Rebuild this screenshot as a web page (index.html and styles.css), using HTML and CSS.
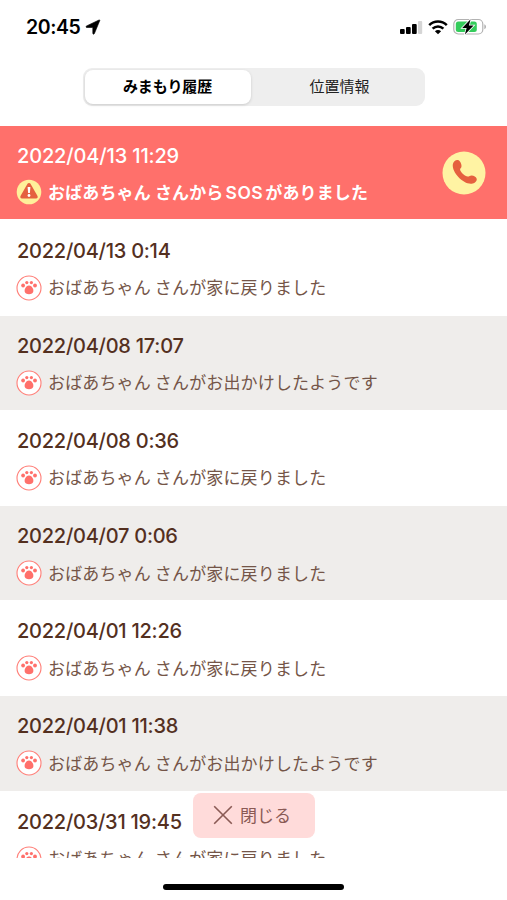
FILE: index.html
```html
<!DOCTYPE html>
<html lang="ja">
<head>
  <meta charset="UTF-8" />
  <meta name="viewport" content="width=device-width, initial-scale=1.0"/>
  <title>みまもり履歴</title>
  <link rel="stylesheet" href="styles.css">
</head>
<body>
  <svg class="sprite" width="0" height="0">
    <symbol id="paw" viewBox="0 0 26 26">
      <circle cx="13" cy="13" r="12" fill="#fff" stroke="#ff7f78" stroke-width="1.1"/>
      <g fill="#ff706b">
        <circle cx="7.1" cy="10.5" r="1.9"/>
        <circle cx="10.8" cy="7.6" r="1.6"/>
        <circle cx="15.4" cy="7.6" r="1.6"/>
        <circle cx="19" cy="10.5" r="1.9"/>
        <path d="M13 10.500c2 0 2.700 1.200 3.600 2.600 1.300 2 1 4.700-.6 5.500-1 .6-2 .700-3 .700s-2-.1-3-.7c-1.600-.8-1.900-3.500-.6-5.500.9-1.400 1.600-2.600 3.600-2.600z"/>
      </g>
    </symbol>
  </svg>

  <header class="status">
    <div class="time">
      <span>20:45</span>
      <svg width="16" height="16" viewBox="0 0 16 16"><path d="M14.8 1.5 9.4 14.6c-.4.9-1.6.7-1.6-.3V8.500H1.900c-1 0-1.200-1.200-.3-1.600L14 1c.6-.3 1 0 .8.5z" stroke="#000" stroke-width=".6"/></svg>
    </div>
    <div class="signals">
      <svg width="23" height="15" viewBox="0 0 23 15">
        <rect x="0" y="9" width="4.7" height="5" rx="1"/>
        <rect x="6" y="7" width="4.7" height="7" rx="1"/>
        <rect x="12" y="4" width="4.7" height="10" rx="1"/>
        <rect x="18" y="1" width="4.2" height="13" rx="1" fill="#d5d5d5"/>
      </svg>
      <svg width="20" height="15" viewBox="0 0 20 15">
        <g fill="none" stroke="#000" stroke-width="2.5">
          <path d="M1.2 5.2c5-4.8 12.6-4.8 17.600 0"/>
          <path d="M4.6 8.700c3.100-3 7.700-3 10.800 0"/>
        </g>
        <path d="M10 14.300 6.900 11.200c1.800-1.500 4.400-1.500 6.200 0z"/>
      </svg>
      <svg width="34" height="18" viewBox="0 0 34 18">
        <rect x=".8" y="1.5" width="29" height="14.5" rx="4.5" fill="none" stroke="#b2b2b2" stroke-width="1.2"/>
        <path d="M31.300 6.300v5c2.300-.8 2.300-4.200 0-5z" fill="#b2b2b2"/>
        <rect x="2.8" y="3.5" width="21" height="10.5" rx="2.5" fill="#34cc5b"/>
        <path d="M17.600 1.200 9.200 10h4.400l-1.700 6.400 8.700-8.900h-4.700z" stroke="#fff" stroke-width="1.6" paint-order="stroke"/>
      </svg>
    </div>
  </header>

  <nav class="tabs">
    <button class="tab active">みまもり履歴</button>
    <button class="tab">位置情報</button>
  </nav>

  <main class="history">
    <div class="row sos">
      <div class="info">
        <div class="date">2022/04/13 11:29</div>
        <div class="message">
          <svg class="icon" viewBox="0 0 26 26">
            <circle cx="13" cy="13" r="12.3" fill="#fff09a"/>
            <path d="M11.500 4.800c.6-1 2.400-1 3 0l7 12.200c.6 1.200-.1 2.400-1.400 2.400H5.900c-1.300 0-2-1.200-1.400-2.400z" fill="#e5603f"/>
            <path d="M11.600 8h2.800l-.5 6h-1.800z" fill="#fff"/>
            <circle cx="13" cy="16.500" r="1.4" fill="#fff"/>
          </svg>
          <span>おばあちゃん さんから<b class="latin">SOS</b>がありました</span>
        </div>
      </div>
      <button class="call" aria-label="電話">
        <svg width="44" height="44" viewBox="0 0 44 44">
          <circle cx="22" cy="22" r="21.5" fill="#fff3a3"/>
          <path d="M10.800 13.500c.3-3 3.700-5.400 5.800-4.200 1.900 1.100 3.400 4.800 2.800 6.700-.3 1.100-1.500 1.500-1.300 2.700.4 2.600 4.900 6.500 7.600 6.800 1.500.2 2.300-1.200 3.900-1.100 2.200.1 4.700 1.700 5.100 3.300.6 2.300-2.200 4.700-5 5-8.200.9-19.900-11-18.900-19.200z" fill="#e5603f"/>
        </svg>
      </button>
    </div>

    <div class="row">
      <div class="date">2022/04/13 0:14</div>
      <div class="message"><svg class="icon"><use href="#paw"/></svg><span>おばあちゃん さんが家に戻りました</span></div>
    </div>

    <div class="row gray">
      <div class="date">2022/04/08 17:07</div>
      <div class="message"><svg class="icon"><use href="#paw"/></svg><span>おばあちゃん さんがお出かけしたようです</span></div>
    </div>

    <div class="row">
      <div class="date">2022/04/08 0:36</div>
      <div class="message"><svg class="icon"><use href="#paw"/></svg><span>おばあちゃん さんが家に戻りました</span></div>
    </div>

    <div class="row gray">
      <div class="date">2022/04/07 0:06</div>
      <div class="message"><svg class="icon"><use href="#paw"/></svg><span>おばあちゃん さんが家に戻りました</span></div>
    </div>

    <div class="row">
      <div class="date">2022/04/01 12:26</div>
      <div class="message"><svg class="icon"><use href="#paw"/></svg><span>おばあちゃん さんが家に戻りました</span></div>
    </div>

    <div class="row gray">
      <div class="date">2022/04/01 11:38</div>
      <div class="message"><svg class="icon"><use href="#paw"/></svg><span>おばあちゃん さんがお出かけしたようです</span></div>
    </div>

    <div class="row">
      <div class="date">2022/03/31 19:45</div>
      <div class="message"><svg class="icon"><use href="#paw"/></svg><span>おばあちゃん さんが家に戻りました</span></div>
    </div>
  </main>

  <button class="close">
    <svg width="20" height="20" viewBox="0 0 20 20"><path d="M1.200 1.200 18.800 18.800M18.800 1.200 1.200 18.800" fill="none" stroke="#8a5a55" stroke-width="1.6"/></svg>
    <span>閉じる</span>
  </button>

  <footer class="home">
    <div class="home-bar"></div>
  </footer>
</body>
</html>
```
FILE: styles.css
```css
:root {
  --coral: #ff706b;
  --brown: #54301f;
  --brown-light: #745548;
  --gray: #efedeb;
}

* {
  box-sizing: border-box;
}

body {
  margin: 0;
  height: 900px;
  display: flex;
  flex-direction: column;
  position: relative;
  overflow: hidden;
  background-color: #fff;
  font-family: Inter, "Noto Sans CJK JP", sans-serif;
  color: var(--brown);
}

button {
  border: none;
  padding: 0;
  background: none;
  font-family: inherit;
  color: inherit;
}

svg {
  display: block;
  flex: none;
}

.sprite {
  position: absolute;
}

/* ステータスバー */
.status {
  flex: none;
  height: 68px;
  padding: 15px 20px 0 26px;
  display: flex;
  justify-content: space-between;
  align-items: flex-start;
  color: #000;
}

.time {
  display: flex;
  align-items: center;
  gap: 5px;
  height: 24px;
  font-size: 19.5px;
  font-weight: 600;
  letter-spacing: -0.4px;
}

.signals {
  display: flex;
  align-items: center;
  gap: 5px;
  height: 24px;
}

/* タブ */
.tabs {
  flex: none;
  align-self: center;
  display: flex;
  width: 342px;
  height: 38px;
  padding: 2px;
  border-radius: 9px;
  background-color: #eee;
}

.tab {
  flex: 1;
  padding: 0 0 2px 6px;
  border-radius: 8px;
  font-family: "Noto Sans CJK JP", sans-serif;
  font-size: 15px;
  font-weight: 400;
  line-height: 32px;
  color: #222;
}

.tab.active {
  flex: 0 0 166px;
  padding-left: 0;
  font-weight: 700;
  letter-spacing: -0.15px;
  color: #000;
  background-color: #fff;
  box-shadow: 0 1px 3px rgba(0,0,0,0.15);
}

/* 履歴 */
.history {
  flex: none;
  height: 732px;
  margin-top: 20px;
  overflow: hidden;
}

.row {
  height: 95.15px;
  padding: 17px 17px 0;
  background-color: #fff;
}

.row.gray {
  border-bottom: 1px solid #fff;
  background-color: var(--gray);
}

.row.sos {
  display: flex;
  justify-content: space-between;
  height: 93px;
  margin-bottom: 1.7px;
  color: #fff;
  background-color: var(--coral);
}

.date {
  font-size: 20px;
  font-weight: 500;
  line-height: 26px;
  letter-spacing: -0.25px;
  white-space: nowrap;
}

.sos .date {
  letter-spacing: -0.15px;
}

.message {
  display: flex;
  align-items: center;
  gap: 6px;
  height: 26px;
  margin: 11px 0 0 -1px;
  font-family: "Noto Sans CJK JP", sans-serif;
  font-size: 17px;
  letter-spacing: 0.15px;
  white-space: nowrap;
  color: var(--brown-light);
}

.message span {
  margin-top: -2px;
}

.sos .message {
  margin-top: 10px;
  font-weight: 700;
  color: #fff;
}

.latin {
  font-family: Inter, sans-serif;
  font-size: 17.5px;
  font-weight: 600;
  letter-spacing: 0.5px;
  margin: 0 2px;
}

.icon {
  width: 26px;
  height: 26px;
}

.call {
  width: 44px;
  height: 44px;
  margin: 8px 4px 0 0;
}

/* リストの上に重なる閉じるボタン */
.close {
  position: absolute;
  left: 193px;
  top: 793px;
  width: 122px;
  height: 45px;
  display: flex;
  align-items: center;
  justify-content: center;
  gap: 7px;
  padding: 0 4px 1px 0;
  border-radius: 8px;
  background-color: #ffdbda;
  font-family: "Noto Sans CJK JP", sans-serif;
  font-size: 17px;
  color: #8a5a55;
}

.close span {
  margin-top: -2px;
}

.home {
  flex: 1;
  display: flex;
  justify-content: center;
  padding-top: 26px;
}

.home-bar {
  width: 181px;
  height: 6px;
  border-radius: 3px;
  background-color: #000;
}
```
